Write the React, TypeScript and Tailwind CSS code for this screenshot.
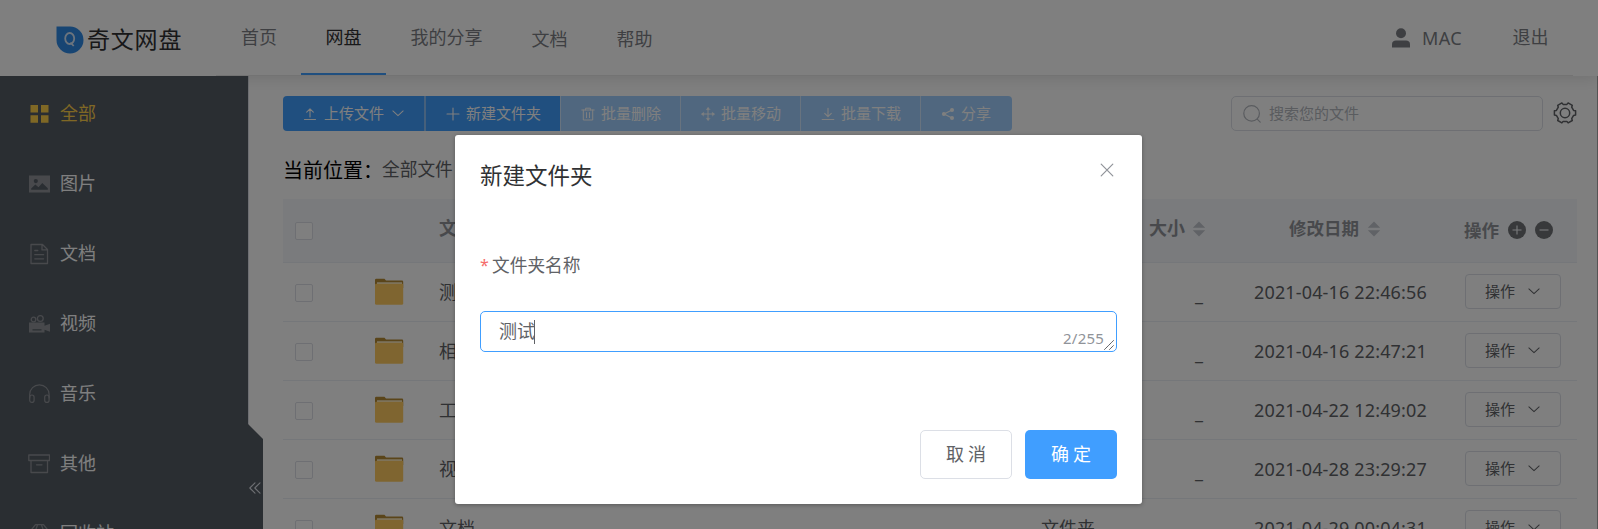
import React from "react";

type IconProps = { className?: string };

const stroke = {
  fill: "none",
  stroke: "currentColor",
  strokeLinecap: "round" as const,
  strokeLinejoin: "round" as const,
};

const Chevron = ({ className }: IconProps) => (
  <svg viewBox="0 0 14 8" className={className} {...stroke} strokeWidth="1.2">
    <path d="M1 1l6 5.6L13 1" />
  </svg>
);

const UploadIcon = () => (
  <svg viewBox="0 0 14 14" className="h-3.5 w-3.5" {...stroke} strokeWidth="1.1">
    <path d="M1.500 12.500h11M7 10V2M3.700 5.200L7 1.900l3.300 3.300" />
  </svg>
);

const PlusIcon = () => (
  <svg viewBox="0 0 14 14" className="h-3.5 w-3.5" {...stroke} strokeWidth="1.1">
    <path d="M7 1v12M1 7h12" />
  </svg>
);

const TrashIcon = () => (
  <svg viewBox="0 0 14 14" className="h-3.5 w-3.5" {...stroke} strokeWidth="1">
    <path d="M.8 3h12.400M4.600 3V1.200h4.800V3M2.300 3v10h9.400V3M5.500 5.600v5M8.500 5.600v5" />
  </svg>
);

const MoveIcon = () => (
  <svg viewBox="0 0 14 14" className="h-3.5 w-3.5" {...stroke} strokeWidth="1">
    <path d="M7 1v12M1 7h12" />
    <path
      fill="currentColor"
      strokeWidth="0.4"
      d="M7 .6L5.200 2.700h3.600zM7 13.400l-1.800-2.100h3.600zM.6 7l2.100-1.800v3.600zM13.400 7l-2.100-1.800v3.600z"
    />
  </svg>
);

const DownloadIcon = () => (
  <svg viewBox="0 0 14 14" className="h-3.5 w-3.5" {...stroke} strokeWidth="1.1">
    <path d="M1.200 12.500h11.600M7 1.300v8.200M3.700 6.300L7 9.600l3.300-3.300" />
  </svg>
);

const ShareIcon = () => (
  <svg viewBox="0 0 14 14" className="h-3.5 w-3.5" {...stroke} strokeWidth="1.3">
    <path d="M11 3L3 7l8 4" />
    <g fill="currentColor" stroke="none">
      <circle cx="11" cy="2.9" r="2" />
      <circle cx="2.9" cy="7" r="2" />
      <circle cx="11" cy="11.1" r="2" />
    </g>
  </svg>
);

const SearchIcon = () => (
  <svg viewBox="0 0 18 18" className="h-[18px] w-[18px]" {...stroke} strokeWidth="1.2">
    <circle cx="8.600" cy="8.400" r="7.800" />
    <path d="M14.200 14.200l3 3" />
  </svg>
);

const GearIcon = () => (
  <svg viewBox="0 0 24 24" className="h-6 w-6 text-[#606266]" {...stroke} strokeWidth="1.500">
    <circle cx="12" cy="12" r="4.700" />
    <path d="M8.900 1.900l1.200 1.500h3.800l1.200-1.500 4.200 2.400-.6 1.900 1.900 3.200 2 .4v4.200l-2 .4-1.900 3.200.6 1.900-4.200 2.400-1.200-1.500h-3.800l-1.200 1.500-4.200-2.400.6-1.900-1.900-3.200-2-.4V9.800l2-.4 1.900-3.200-.6-1.900z" />
  </svg>
);

const UserIcon = () => (
  <svg viewBox="0 0 18 20" className="h-5 w-[18px]" fill="currentColor">
    <circle cx="9" cy="5.200" r="5" />
    <path d="M0 19.500v-3.200C0 13.600 1.600 12.500 4 12.500h10c2.400 0 4 1.100 4 3.800v3.200z" />
  </svg>
);

const GridIcon = () => (
  <svg viewBox="0 0 22 22" className="h-[22px] w-[22px]" fill="currentColor">
    <path d="M2.500 2h7.500v7.500H2.500zM13 2h7.500v7.500H13zM2.500 12.300h7.500v7.400H2.500zM13 12.300h7.500v7.400H13z" />
  </svg>
);

const PictureIcon = () => (
  <svg viewBox="0 0 22 22" className="h-[22px] w-[22px]" fill="currentColor" fillRule="evenodd">
    <path d="M1 2.500h21v17H1zM3.200 16.700h16.600v-1.500L14.300 10l-3.800 4.200-3.200-2.700-4.100 4zM7.800 6a2.100 2.100 0 100 4.200A2.100 2.100 0 007.800 6z" />
  </svg>
);

const DocIcon = () => (
  <svg viewBox="0 0 22 22" className="h-[22px] w-[22px]" {...stroke} strokeWidth="1.300">
    <path d="M3 1.500h11.500l5 5v14H3zM14 1.700v5.200h5.300M6.800 7.500h3M6.800 11.700h8.800M6.800 15.800h8.800" />
  </svg>
);

const VideoIcon = () => (
  <svg viewBox="0 0 22 22" className="h-[22px] w-[22px]" fill="currentColor" fillRule="evenodd">
    <path d="M1 9.500h15.500v3.200l5.500-2v8l-5.500-2v2.800H1zM4.500 16.200v1.200h9v-1.200z" />
    <circle cx="5.500" cy="6.500" r="2.300" fill="none" stroke="currentColor" strokeWidth="1.300" />
    <circle cx="12.300" cy="5.500" r="2.900" fill="none" stroke="currentColor" strokeWidth="1.300" />
  </svg>
);

const HeadsetIcon = () => (
  <svg viewBox="0 0 22 22" className="h-[22px] w-[22px]" {...stroke} strokeWidth="1.200">
    <path d="M1.700 15v-3.500a9.700 9.700 0 0119.400 0V15" />
    <rect x="1.700" y="12" width="4.400" height="7.400" rx="2.200" />
    <rect x="16.700" y="12" width="4.400" height="7.400" rx="2.200" />
  </svg>
);

const BoxIcon = () => (
  <svg viewBox="0 0 22 22" className="h-[22px] w-[22px]" {...stroke} strokeWidth="1.300">
    <path d="M.8 2h20.700v5.500H.8zM3 7.500V19.500h16.500V7.500M8.500 11.800h5.500" />
  </svg>
);

const RecycleIcon = () => (
  <svg viewBox="0 0 22 22" className="h-[22px] w-[22px]" {...stroke} strokeWidth="1.300">
    <path d="M2 8.500L7.500 1.700h8L21 8.500l-5.500 10h-8zM9.500 2L7 9M13.500 2L16 9" />
  </svg>
);

const FolderIcon = () => (
  <svg viewBox="0 0 30 28" className="h-7 w-[30px]">
    <path d="M1 27V2Q1 .8 2.200.8H10.500l1.500 1.700H28Q29.200 2.500 29.200 3.700V10H1z" fill="#b58a35" />
    <path d="M3 4.300h25v3H3z" fill="#fff1cf" />
    <path d="M1 6.500Q1 5.800 2 5.800H28.300q.9 0 .9.900V25.300q0 1.500-1.500 1.500H2.500Q1 26.800 1 25.300z" fill="#ffcb61" />
  </svg>
);

const SortIcon = () => (
  <svg viewBox="0 0 14 16" className="h-4 w-3.5 text-[#c0c4cc]" fill="currentColor">
    <path d="M7 .5l6.200 6.300H.8zM7 15.500L.8 9.200h12.400z" />
  </svg>
);

const RoundIcon = ({ plus }: { plus: boolean }) => (
  <svg viewBox="0 0 18 18" className="mb-0.5 h-[18px] w-[18px]">
    <circle cx="9" cy="9" r="9" fill="#707276" />
    <path d={plus ? "M9 4.500v9M4.500 9h9" : "M4.500 9h9"} stroke="#f5f7fa" strokeWidth="1.100" />
  </svg>
);

const CloseIcon = () => (
  <svg viewBox="0 0 14 14" className="h-3.5 w-3.5 text-[#909399]" {...stroke} strokeWidth="1.200">
    <path d="M1.200 1.200l11.600 11.600M12.800 1.200L1.200 12.800" />
  </svg>
);

const sideItems = [
  { label: "全部", icon: <GridIcon />, active: true },
  { label: "图片", icon: <PictureIcon /> },
  { label: "文档", icon: <DocIcon /> },
  { label: "视频", icon: <VideoIcon /> },
  { label: "音乐", icon: <HeadsetIcon /> },
  { label: "其他", icon: <BoxIcon /> },
  { label: "回收站", icon: <RecycleIcon /> },
];

const batchActions = [
  { label: "批量删除", icon: <TrashIcon />, width: "w-[120px]" },
  { label: "批量移动", icon: <MoveIcon />, width: "w-[120px]" },
  { label: "批量下载", icon: <DownloadIcon />, width: "w-[120px]" },
  { label: "分享", icon: <ShareIcon />, width: "w-[92px] rounded-r-[4px]" },
];

const rows = [
  { name: "测试", date: "2021-04-16 22:46:56" },
  { name: "相册", date: "2021-04-16 22:47:21" },
  { name: "工作", date: "2021-04-22 12:49:02" },
  { name: "视频", date: "2021-04-28 23:29:27" },
  { name: "文档", date: "2021-04-29 00:04:31" },
];

const columns = "grid grid-cols-[80px_76px_602px_107px_106px_210px_113px]";

function Header() {
  return (
    <header className="relative flex h-[76px] shrink-0 bg-white text-[18px] text-[#7c7f85] shadow-[0_2px_15px_rgba(0,0,0,0.12)]">
      <div className="flex w-[216px] items-center pl-14 pt-1">
        <svg viewBox="0 0 28 28" className="h-7 w-7">
          <path d="M.5.500H14A13.500 13.500 0 1 1 .5 14z" fill="#2f8ae6" />
          <g fill="none" stroke="#d7e8fb" strokeWidth="1.800">
            <ellipse cx="13.700" cy="12.500" rx="4.500" ry="5.500" />
            <path d="M14.500 16.500l3.200 3.500" />
          </g>
        </svg>
        <span className="mb-0.5 ml-[3px] text-[23px] font-normal leading-7 tracking-[0.800px] text-[#303133]">奇文网盘</span>
      </div>
      <nav className="flex w-[1357px] border-b border-[#e6e6e6] leading-[74px]">
        <span className="w-[86px] text-center">首页</span>
        <span className="-ml-px h-[75px] w-[85px] border-b-2 border-[#409eff] text-center text-[#303133]">网盘</span>
        <span className="w-[121px] text-center">我的分享</span>
        <span className="w-[85px] pt-0.5 text-center">文档</span>
        <span className="w-[85px] pt-0.5 text-center">帮助</span>
        <span className="ml-auto flex w-24 items-center">
          <UserIcon />
          <span className="ml-3 tracking-[0.4px]">MAC</span>
        </span>
        <span className="w-[85px] text-center">退出</span>
      </nav>
    </header>
  );
}

function Sidebar() {
  return (
    <aside className="relative z-10 h-[453px] w-[248px] shrink-0 bg-[#545c64] pt-[3px] text-[18px] text-white">
      {sideItems.map((item) => (
        <div
          key={item.label}
          className={item.active ? "flex h-[70px] items-center pl-7 text-[#ffd04b]" : "flex h-[70px] items-center pl-7"}
        >
          <span className={item.active ? "text-[#ffd04b]" : "text-[#909399]"}>{item.icon}</span>
          <span className="mb-0.5 ml-2.5">{item.label}</span>
        </div>
      ))}
      <div className="absolute left-[248px] top-[348px] flex h-[125px] w-[15px] items-center bg-[#545c64] pt-0.5 [clip-path:polygon(0_0,100%_15px,100%_100%,0_100%)]">
        <svg viewBox="0 0 12 12" className="ml-px h-3 w-3 text-[#dcdfe6]" {...stroke} strokeWidth="1.100">
          <path d="M6 .8L.8 6 6 11.200M11 .8L5.800 6 11 11.200" />
        </svg>
      </div>
    </aside>
  );
}

function Toolbar() {
  return (
    <div className="flex h-[35px] text-[15px] leading-[35px] text-white">
      <button className="flex w-[142px] items-center rounded-l-[4px] border-r border-[#8cc0f7] bg-[#409eff] pl-5">
        <UploadIcon />
        <span className="ml-[7px]">上传文件</span>
        <Chevron className="ml-2 h-[7px] w-3" />
      </button>
      <button className="flex w-[135px] items-center border-l border-[#8cc0f7] bg-[#409eff] pl-5">
        <PlusIcon />
        <span className="ml-1.5">新建文件夹</span>
      </button>
      {batchActions.map((a) => (
        <button key={a.label} className={`flex items-center border-l border-white/50 bg-[#a0cfff] pl-5 ${a.width}`}>
          {a.icon}
          <span className="ml-1.5">{a.label}</span>
        </button>
      ))}
      <div className="ml-auto flex h-[35px] w-[312px] items-center rounded-[5px] border border-[#dcdfe6] pl-[11px] text-[#b4b8bf]">
        <SearchIcon />
        <span className="ml-2">搜索您的文件</span>
      </div>
      <div className="ml-2.5 mt-[5px]">
        <GearIcon />
      </div>
    </div>
  );
}

const Checkbox = () => (
  <span className="ml-3 block h-[18px] w-[18px] rounded-[2px] border border-[#dcdfe6] bg-white" />
);

function FileTable() {
  return (
    <div className="mt-[15px] text-[18px]">
      <div className={`${columns} h-16 items-center border-b border-[#ebeef5] bg-[#f5f7fa] font-bold text-[#909399]`}>
        <div className="pt-px"><Checkbox /></div>
        <div />
        <div className="pb-1">文件名</div>
        <div className="pb-1">类型</div>
        <div className="flex items-center gap-[7px] pb-1 pl-px">大小 <SortIcon /></div>
        <div className="flex items-center gap-2 pb-1 pl-[35px] text-[17.5px]">修改日期 <SortIcon /></div>
        <div className="flex items-center gap-[9px] text-[17.5px]">操作 <RoundIcon plus /> <RoundIcon plus={false} /></div>
      </div>
      {rows.map((r) => (
        <div key={r.name} className={`${columns} h-[59px] items-center border-b border-[#ebeef5] text-[#606266]`}>
          <div className="pt-0.5"><Checkbox /></div>
          <div className="pl-[11px]"><FolderIcon /></div>
          <div>{r.name}</div>
          <div>文件夹</div>
          <div className="pl-[47px] pt-1">_</div>
          <div className="whitespace-nowrap tracking-[0.15px]">{r.date}</div>
          <button className="mb-0.5 ml-px flex h-[35px] w-24 items-center rounded-[4px] border border-[#dcdfe6] pl-[19px] text-[15px]">
            操作
            <Chevron className="ml-[13px] h-[7px] w-3" />
          </button>
        </div>
      ))}
    </div>
  );
}

function NewFolderDialog() {
  return (
    <section className="flex h-[369px] w-[687px] flex-col rounded-[3px] bg-white px-[25px] text-[18px] text-[#606266] shadow-[0_1px_4px_rgba(0,0,0,0.300)]">
      <div className="flex items-start justify-between pt-[25px]">
        <h2 className="text-[22.500px] leading-8 text-[#303133]">新建文件夹</h2>
        <button className="mr-[3px] mt-[3px]"><CloseIcon /></button>
      </div>
      <label className="mt-[59px] flex h-7 items-center leading-7">
        <span className="w-3 text-[16px] text-[#f56c6c]">*</span>
        <span className="text-[17.7px]">文件夹名称</span>
      </label>
      <div className="mt-8 flex h-[41px] items-center rounded-[5px] border border-[#409eff] pl-[18px]">
        <span>测试</span>
        <span className="-ml-px h-6 w-px bg-[#606266]" />
        <span className="ml-auto pt-3 text-[15px] leading-5 tracking-[0.2px] text-[#909399]">2/255</span>
        <svg viewBox="0 0 10 10" className="mb-px mr-0.5 h-2.5 w-2.5 self-end" {...stroke} strokeWidth="1">
          <path d="M.5 9.500l9-9M5.500 9.500l4-4" stroke="#606266" strokeDasharray="1.500 .5" />
        </svg>
      </div>
      <div className="mt-[78px] flex justify-end gap-[13px]">
        <button className="h-[49px] w-[92px] rounded-[5px] border border-[#dcdfe6] pb-px pl-1 tracking-[4px]">取消</button>
        <button className="h-[49px] w-[92px] rounded-[5px] bg-[#409eff] pb-px pl-1 font-normal tracking-[4px] text-white">确定</button>
      </div>
    </section>
  );
}

export default function App() {
  return (
    <div className="relative h-[529px] w-[1598px] overflow-hidden bg-white font-['Noto_Sans','Noto_Sans_CJK_SC',sans-serif] font-[370]">
      <div className="flex h-full flex-col">
        <Header />
        <div className="flex min-h-0 flex-1">
          <Sidebar />
          <main className="w-[1349px] border-l border-[#dcdfe6] pl-[34px] pr-5 pt-5">
            <Toolbar />
            <div className="mt-[23px] flex h-[30px] items-center text-[20px] text-black">
              <span className="pt-[3px]">当前位置：</span>
              <span className="-ml-px text-[17.700px] text-[#606266]">全部文件</span>
            </div>
            <FileTable />
          </main>
          <div className="w-px bg-[#a8a8a8]" />
        </div>
      </div>
      <div className="absolute inset-0 z-20 flex items-start justify-center bg-black/50 pr-px pt-[135px]">
        <NewFolderDialog />
      </div>
    </div>
  );
}
